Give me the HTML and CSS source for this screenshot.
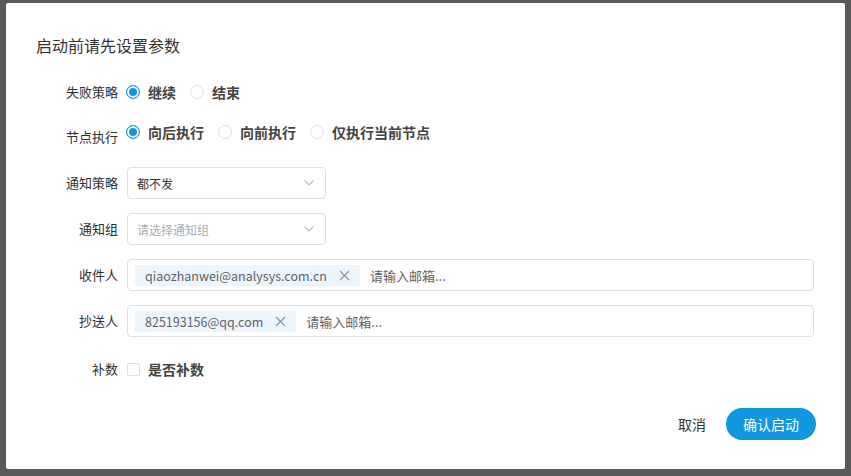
FILE: index.html
```html
<!DOCTYPE html>
<html lang="zh-CN">
<head>
<meta charset="utf-8">
<title>启动前请先设置参数</title>
<link rel="stylesheet" href="styles.css">
</head>
<body>
<div class="overlay">
  <div class="modal">
    <div class="modal-title">启动前请先设置参数</div>
    <div class="form">
      <div class="row row-first">
        <div class="label">失败策略</div>
        <div class="radio-group">
          <span class="radio checked"></span><span class="opt">继续</span>
          <span class="radio"></span><span class="opt">结束</span>
        </div>
      </div>
      <div class="row row-second">
        <div class="label label-low">节点执行</div>
        <div class="radio-group">
          <span class="radio checked"></span><span class="opt">向后执行</span>
          <span class="radio"></span><span class="opt">向前执行</span>
          <span class="radio"></span><span class="opt">仅执行当前节点</span>
        </div>
      </div>
      <div class="row row-select">
        <div class="label">通知策略</div>
        <div class="select">
          <span class="select-value">都不发</span>
          <svg class="chev" width="12" height="8" viewBox="0 0 12 8"><path d="M1.5 1.5 L6 6 L10.5 1.5" fill="none" stroke="#b8bcc4" stroke-width="1.2"/></svg>
        </div>
      </div>
      <div class="row row-gap">
        <div class="label">通知组</div>
        <div class="select">
          <span class="select-placeholder">请选择通知组</span>
          <svg class="chev" width="12" height="8" viewBox="0 0 12 8"><path d="M1.5 1.5 L6 6 L10.5 1.5" fill="none" stroke="#b8bcc4" stroke-width="1.2"/></svg>
        </div>
      </div>
      <div class="row row-gap">
        <div class="label">收件人</div>
        <div class="tag-input">
          <span class="tag">qiaozhanwei@analysys.com.cn<svg class="tag-x" width="11" height="11" viewBox="0 0 11 11"><path d="M1 1 L10 10 M10 1 L1 10" stroke="#8a8f99" stroke-width="1.1"/></svg></span>
          <span class="tag-placeholder">请输入邮箱...</span>
        </div>
      </div>
      <div class="row row-gap">
        <div class="label">抄送人</div>
        <div class="tag-input">
          <span class="tag">825193156@qq.com<svg class="tag-x" width="11" height="11" viewBox="0 0 11 11"><path d="M1 1 L10 10 M10 1 L1 10" stroke="#8a8f99" stroke-width="1.1"/></svg></span>
          <span class="tag-placeholder">请输入邮箱...</span>
        </div>
      </div>
      <div class="row row-check">
        <div class="label">补数</div>
        <div class="check-group">
          <span class="checkbox"></span><span class="opt">是否补数</span>
        </div>
      </div>
    </div>
    <div class="footer">
      <button class="btn-text">取消</button>
      <button class="btn-primary">确认启动</button>
    </div>
  </div>
</div>
</body>
</html>
```

FILE: styles.css
```css
* { box-sizing: border-box; }
html, body {
  margin: 0;
  padding: 0;
  width: 851px;
  height: 476px;
  overflow: hidden;
}
body {
  background: #5a5a5a;
  font-family: "Noto Sans CJK SC", "Noto Sans", sans-serif;
  color: #333;
}
.overlay {
  padding: 3px 6px 0 6px;
}
.modal {
  width: 839px;
  height: 466px;
  background: #fff;
  border-radius: 2px;
  padding: 31px 31px 0 30px;
  display: flex;
  flex-direction: column;
}
.modal-title {
  font-size: 16px;
  line-height: 22px;
  color: #333;
  height: 22px;
}
.form {
  display: flex;
  flex-direction: column;
}
.row {
  display: flex;
  align-items: center;
  height: 32px;
}
.row-first { margin-top: 20px; }
.row-second { margin-top: 8px; align-items: flex-start; }
.row-select { margin-top: 19px; }
.row-gap { margin-top: 14px; }
.row-check { margin-top: 16px; }
.label {
  width: 82px;
  text-align: right;
  font-size: 13px;
  line-height: 32px;
  color: #2f2f2f;
  margin-right: 8px;
  flex: none;
}
.label-low { line-height: 20px; margin-top: 11px; }
.radio-group, .check-group {
  display: flex;
  align-items: center;
  height: 32px;
}
.radio {
  width: 14px;
  height: 14px;
  border-radius: 50%;
  border: 1px solid #dcdfe6;
  background: #fff;
  margin-right: 8px;
  flex: none;
}
.radio.checked {
  border-color: #0f98e0;
  background: #0f98e0;
  box-shadow: inset 0 0 0 2px #fff;
}
.opt {
  font-size: 14px;
  font-weight: 700;
  color: #444;
  margin-right: 14px;
  line-height: 20px;
}
.select {
  width: 199px;
  height: 32px;
  border: 1px solid #dcdfe6;
  border-radius: 4px;
  display: flex;
  align-items: center;
  justify-content: space-between;
  padding: 0 10px 0 9px;
  margin-left: 1px;
}
.select-value {
  font-size: 12px;
  color: #333;
}
.select-placeholder {
  font-size: 12px;
  color: #a8abb2;
}
.chev { flex: none; }
.tag-input {
  width: 687px;
  height: 32px;
  border: 1px solid #dcdfe6;
  border-radius: 4px;
  margin-left: 1px;
  display: flex;
  align-items: center;
  padding-left: 7px;
}
.tag {
  display: flex;
  align-items: center;
  height: 21px;
  background: #ecf5fc;
  border-radius: 2px;
  padding: 0 10px;
  font-size: 12.5px;
  color: #5f6269;
  margin-right: 10px;
}
.tag-x { margin-left: 12px; }
.tag-placeholder {
  font-size: 13px;
  color: #606060;
}
.checkbox {
  width: 13px;
  height: 13px;
  border: 1px solid #dcdfe6;
  border-radius: 2px;
  margin-left: 1px;
  margin-right: 8px;
}
.footer {
  margin-top: 23px;
  display: flex;
  justify-content: flex-end;
  align-items: center;
  margin-right: -2px;
}
.btn-text {
  background: none;
  border: none;
  font-family: inherit;
  font-size: 14px;
  color: #333;
  padding: 0;
  margin-right: 20px;
}
.btn-primary {
  width: 90px;
  height: 32px;
  border: none;
  border-radius: 16px;
  background: #1097e0;
  color: #fff;
  font-family: inherit;
  font-size: 14px;
  padding: 0;
}
```
